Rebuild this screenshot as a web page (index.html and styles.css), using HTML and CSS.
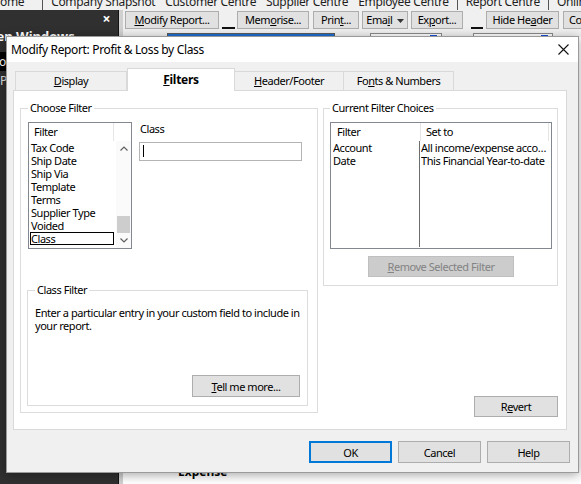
FILE: index.html
```html
<!DOCTYPE html>
<html lang="en">
<head>
    <meta charset="UTF-8">
    <meta name="viewport" content="width=device-width, initial-scale=1.0">
    <title>Modify Report: Profit &amp; Loss by Class</title>
    <link rel="stylesheet" href="styles.css">
</head>
<body>

    <div class="app">
        <div class="nav-strip">
            <span class="home">ome</span><i class="sep"></i>
            <span>Company Snapshot</span>
            <span>Customer Centre</span>
            <span>Supplier Centre</span>
            <span>Employee Centre</span><i class="sep"></i>
            <span>Report Centre</span><i class="sep"></i>
            <span>Online Banking</span>
        </div>

        <div class="workspace">
            <aside class="open-windows">
                <div class="ow-top"><span class="ow-close">&times;</span></div>
                <div class="ow-title">Open Windows</div>
                <ul class="ow-list">
                    <li class="active">Profit &amp; Loss by Class</li>
                    <li>Profit &amp; Loss Standard</li>
                </ul>
            </aside>
            <div class="splitter"></div>
            <main class="report">
                <div class="report-toolbar">
                    <button class="tb modify"><u>M</u>odify Report...</button>
                    <span class="tb-spacer first"></span>
                    <button class="tb memorise">Mem<u>o</u>rise...</button>
                    <button class="tb print">Prin<u>t</u>...</button>
                    <button class="tb email">Ema<u>i</u>l
                        <svg width="7" height="4" viewBox="0 0 7 4"><path d="M0 0H7L3.5 4Z" fill="#333"/></svg>
                    </button>
                    <button class="tb export">Ex<u>p</u>ort...</button>
                    <span class="tb-spacer second"></span>
                    <button class="tb hide">Hide He<u>a</u>der</button>
                    <button class="tb collapse">Collapse</button>
                </div>
                <div class="report-fields">
                    <span class="field dates"></span>
                    <span class="field from"><i></i></span>
                    <span class="field to"><i></i></span>
                </div>
                <div class="report-body">
                    <div class="expense">Expense</div>
                </div>
            </main>
        </div>
    </div>

    <div class="dialog">
        <div class="dialog-title">
            <span>Modify Report: Profit &amp; Loss by Class</span>
            <svg class="close-x" width="11" height="11" viewBox="0 0 11 11">
                <path d="M0.5 0.5L10.5 10.5M10.5 0.5L0.5 10.5" stroke="#111" stroke-width="1.1"/>
            </svg>
        </div>

        <div class="dialog-body">
            <div class="tabs">
                <div class="tab display"><u>D</u>isplay</div>
                <div class="tab filters selected"><u>F</u>ilters</div>
                <div class="tab header"><u>H</u>eader/Footer</div>
                <div class="tab fonts">Fo<u>n</u>ts &amp; Numbers</div>
            </div>

            <div class="tab-panel">
                <fieldset class="group choose-filter">
                    <legend>Choose Filter</legend>
                    <div class="filter-pick">
                        <div class="listbox">
                            <div class="lb-head"><span>Filter</span></div>
                            <div class="lb-body">
                                <ul class="lb-items">
                                    <li>Tax Code</li>
                                    <li>Ship Date</li>
                                    <li>Ship Via</li>
                                    <li>Template</li>
                                    <li>Terms</li>
                                    <li>Supplier Type</li>
                                    <li>Voided</li>
                                    <li class="focus">Class</li>
                                </ul>
                                <div class="vscroll">
                                    <span class="arrow">
                                        <svg width="8" height="5" viewBox="0 0 8 5"><path d="M0.5 4.5L4 1L7.5 4.5" fill="none" stroke="#606060" stroke-width="1.2"/></svg>
                                    </span>
                                    <span class="track"></span>
                                    <span class="thumb"></span>
                                    <span class="arrow">
                                        <svg width="8" height="5" viewBox="0 0 8 5"><path d="M0.5 0.5L4 4L7.5 0.5" fill="none" stroke="#606060" stroke-width="1.2"/></svg>
                                    </span>
                                </div>
                            </div>
                        </div>
                        <div class="class-field">
                            <label>Class</label>
                            <div class="textbox"><span class="caret"></span></div>
                        </div>
                    </div>

                    <fieldset class="group class-filter">
                        <legend>Class Filter</legend>
                        <p>Enter a particular entry in your custom field to include in<br>your report.</p>
                        <div class="btn-row">
                            <button class="tell-more"><u>T</u>ell me more...</button>
                        </div>
                    </fieldset>
                </fieldset>

                <div class="right-col">
                    <fieldset class="group current">
                        <legend>Current Filter Choices</legend>
                        <div class="listview">
                            <div class="lv-head">
                                <span class="c1">Filter</span>
                                <span class="c2">Set to</span>
                            </div>
                            <div class="lv-body">
                                <div class="lv-col c1">
                                    <div>Account</div>
                                    <div>Date</div>
                                </div>
                                <div class="lv-col c2">
                                    <div>All income/expense accounts</div>
                                    <div>This Financial Year-to-date</div>
                                </div>
                            </div>
                        </div>
                        <div class="btn-center">
                            <button class="remove" disabled><u>R</u>emove Selected Filter</button>
                        </div>
                    </fieldset>
                    <div class="btn-row">
                        <button class="revert">R<u>e</u>vert</button>
                    </div>
                </div>
            </div>

            <div class="dialog-buttons">
                <button class="default">OK</button>
                <button>Cancel</button>
                <button>Help</button>
            </div>
        </div>
    </div>

</body>
</html>
```

FILE: styles.css
```css
* {
    box-sizing: border-box;
}

body {
    margin: 0;
    width: 581px;
    height: 484px;
    overflow: hidden;
    position: relative;
    font-family: "Noto Sans", sans-serif;
    font-size: 11px;
    letter-spacing: -0.45px;
    color: #000;
    background: #fff;
}

button {
    font-family: inherit;
    font-size: 11px;
    letter-spacing: inherit;
    color: #000;
    background: #e1e1e1;
    border: 1px solid #adadad;
    border-radius: 0;
    padding: 0;
}

u {
    text-decoration-thickness: 1px;
    text-underline-offset: 1px;
}

/* ---------- application behind the dialog ---------- */

.app {
    display: flex;
    flex-direction: column;
    height: 484px;
}

.nav-strip {
    height: 10px;
    overflow: hidden;
    background: #f0f0f0;
    display: flex;
    font-size: 12px;
    letter-spacing: -0.35px;
    line-height: 12px;
    color: #1e1e1e;
    white-space: nowrap;
}

.nav-strip span {
    margin: -4px 10px 0 0;
    flex: none;
}

.nav-strip .home {
    padding-right: 10px;
}

.nav-strip .sep {
    flex: none;
    width: 1px;
    background: #555;
    margin: 0 8px 0 -2px;
}

.workspace {
    flex: 1;
    display: flex;
}

.open-windows {
    flex: none;
    width: 118px;
    background: #303030;
    color: #fff;
    overflow: hidden;
}

.ow-top {
    height: 18px;
    display: flex;
    justify-content: flex-end;
    align-items: center;
    padding-right: 8px;
}

.ow-close {
    font-size: 14px;
    font-weight: bold;
    line-height: 14px;
}

.ow-title {
    font-size: 13px;
    line-height: 16px;
    font-weight: bold;
    letter-spacing: 0;
    margin-left: -22px;
    white-space: nowrap;
}

.ow-list {
    list-style: none;
    margin: 8px 0 0;
    padding: 0;
    color: #ddd;
    white-space: nowrap;
}

.ow-list li {
    line-height: 19px;
    font-size: 12px;
}

.ow-list li.active {
    background: #000;
    margin-left: -12px;
    color: #fff;
}

.splitter {
    flex: none;
    width: 5px;
    background: #d0d0d0;
    border-left: 1px solid #141414;
}

.report {
    flex: 1;
    min-width: 0;
    display: flex;
    flex-direction: column;
    background: #fff;
}

.report-toolbar {
    height: 20px;
    background: #f0f0f0;
    display: flex;
    align-items: flex-start;
    padding: 1px 0 0 2px;
    white-space: nowrap;
    overflow: hidden;
}

.tb {
    height: 18px;
    flex: none;
    line-height: 16px;
}

.tb.modify { width: 94px; }
.tb.memorise { width: 72px; margin-left: 2px; }
.tb.print { width: 46px; margin-left: 4px; }
.tb.email { width: 46px; margin-left: 3px; }
.tb.export { width: 52px; margin-left: 3px; }
.tb.hide { width: 73px; margin-left: 3px; }
.tb.collapse { width: 60px; margin-left: 4px; text-align: left; padding-left: 5px; }

.tb.email svg {
    vertical-align: middle;
    margin-left: 2px;
}

.tb-spacer {
    flex: none;
    height: 18px;
    border-bottom: 2px solid #111;
}

.tb-spacer.first { width: 13px; margin-left: 3px; }
.tb-spacer.second { width: 12px; margin-left: 8px; }

.report-fields {
    height: 7px;
    background: #f0f0f0;
    display: flex;
    padding-top: 3px;
    overflow: hidden;
}

.field {
    flex: none;
    height: 18px;
    background: #fff;
    border: 1px solid #8a8a8a;
    position: relative;
}

.field.dates {
    width: 168px;
    margin-left: 44px;
    background: #1e6fd0;
    border-color: #5a5a5a;
}

.field.from {
    width: 72px;
    margin-left: 35px;
}

.field.to {
    width: 80px;
    margin-left: 31px;
}

.field i {
    position: absolute;
    right: 4px;
    top: 1px;
    width: 7px;
    height: 7px;
    border: 1px solid #1b4fd8;
}

.report-body {
    flex: 1;
    display: flex;
    flex-direction: column;
    justify-content: flex-end;
}

.expense {
    font-size: 12px;
    font-weight: bold;
    letter-spacing: 0;
    line-height: 14px;
    padding-left: 55px;
    margin-bottom: 5px;
}

/* ---------- dialog ---------- */

.dialog {
    position: absolute;
    left: 6px;
    top: 36px;
    width: 573px;
    height: 437px;
    background: #f0f0f0;
    border: 1px solid #9a9a9a;
    box-shadow: 0 2px 10px rgba(0, 0, 0, 0.35);
    display: flex;
    flex-direction: column;
}

.dialog-title {
    height: 25px;
    flex: none;
    background: #fff;
    display: flex;
    align-items: center;
    justify-content: space-between;
    padding: 0 9px 0 4px;
    font-size: 12px;
    letter-spacing: -0.35px;
}

.dialog-body {
    flex: 1;
    display: flex;
    flex-direction: column;
    padding: 6px 11px 9px 6px;
}

.tabs {
    display: flex;
    align-items: flex-end;
    height: 23px;
    margin: 0 0 -1px 2px;
}

.tab {
    height: 19px;
    margin-bottom: 1px;
    border: 1px solid #d9d9d9;
    border-bottom: none;
    background: #f0f0f0;
    text-align: center;
    line-height: 18px;
}

.tab + .tab {
    border-left: none;
}

.tab.display { width: 112px; }
.tab.filters { width: 108px; }
.tab.header { width: 109px; }
.tab.fonts { width: 110px; }

.tab.selected {
    position: relative;
    z-index: 1;
    height: 23px;
    margin-bottom: 0;
    background: #fff;
    border-left: 1px solid #d9d9d9;
    font-weight: bold;
    font-size: 12px;
    letter-spacing: -0.3px;
    line-height: 22px;
}

.tab-panel {
    height: 340px;
    flex: none;
    background: #fff;
    border: 1px solid #d9d9d9;
    padding: 9px 7px 12px 6px;
    display: flex;
    gap: 5px;
}

.group {
    margin: 0;
    min-width: 0;
    border: 1px solid #dcdcdc;
}

.group legend {
    padding: 0 2px;
    line-height: 16px;
}

.choose-filter {
    width: 298px;
    height: 313px;
    padding: 6px 9px 6px 7px;
}

.filter-pick {
    display: flex;
    gap: 7px;
}

.listbox {
    width: 104px;
    height: 127px;
    border: 1px solid #828790;
    display: flex;
    flex-direction: column;
}

.lb-head {
    height: 18px;
    display: flex;
}

.lb-head span {
    width: 85px;
    padding-left: 5px;
    line-height: 18px;
    border-right: 1px solid #e5e5e5;
}

.lb-body {
    flex: 1;
    display: flex;
}

.lb-items {
    list-style: none;
    margin: 0;
    padding: 0;
    width: 87px;
}

.lb-items li {
    line-height: 13px;
    height: 13px;
    padding-left: 2px;
    white-space: nowrap;
}

.lb-items li.focus {
    width: 84px;
    margin-left: 1px;
    padding-left: 1px;
    outline: 1px solid #000;
    outline-offset: -1px;
}

.vscroll {
    width: 15px;
    display: flex;
    flex-direction: column;
    background: #fafafa;
}

.vscroll .arrow {
    height: 15px;
    display: flex;
    align-items: center;
    justify-content: center;
}

.vscroll .track {
    flex: 1;
}

.vscroll .thumb {
    height: 17px;
    margin: 0 1px;
    background: #cdcdcd;
}

.class-field {
    display: flex;
    flex-direction: column;
}

.class-field label {
    line-height: 16px;
    margin-top: -1px;
    padding-left: 1px;
}

.textbox {
    width: 163px;
    height: 19px;
    margin-top: 5px;
    border: 1px solid #b4b4b4;
    padding: 2px 0 0 3px;
}

.caret {
    display: block;
    width: 1px;
    height: 12px;
    background: #000;
}

.class-filter {
    width: 281px;
    height: 124px;
    margin: 33px 0 0 -1px;
    padding: 8px 7px 8px 7px;
}

.class-filter p {
    margin: 0;
    line-height: 13px;
    white-space: nowrap;
}

.btn-row {
    display: flex;
    justify-content: flex-end;
}

.tell-more {
    width: 108px;
    height: 22px;
    margin-top: 43px;
}

.right-col {
    width: 235px;
    display: flex;
    flex-direction: column;
    justify-content: space-between;
}

.current {
    padding: 6px 5px 8px 6px;
}

.listview {
    width: 222px;
    height: 127px;
    border: 1px solid #828790;
    display: flex;
    flex-direction: column;
}

.lv-head {
    height: 18px;
    display: flex;
    line-height: 18px;
}

.lv-head .c1 {
    width: 89px;
    padding-left: 6px;
}

.lv-head .c2 {
    width: 129px;
    padding-left: 5px;
    border-left: 1px solid #e5e5e5;
    border-right: 1px solid #e5e5e5;
}

.lv-body {
    flex: 1;
    display: flex;
}

.lv-col div {
    line-height: 13px;
    white-space: nowrap;
    overflow: hidden;
    text-overflow: ellipsis;
}

.lv-col.c1 {
    width: 89px;
    padding-left: 2px;
    border-right: 1px solid #6d6d6d;
    margin-bottom: 1px;
}

.lv-col.c2 {
    width: 131px;
    padding-left: 1px;
}

.btn-center {
    display: flex;
    justify-content: center;
    margin-top: 7px;
}

.remove {
    width: 146px;
    height: 21px;
    background: #cccccc;
    border-color: #bfbfbf;
    color: #838383;
}

.revert {
    width: 84px;
    height: 21px;
}

.dialog-buttons {
    display: flex;
    justify-content: flex-end;
    gap: 6px;
    margin: 11px -3px 0 0;
}

.dialog-buttons button {
    width: 83px;
    height: 22px;
}

.dialog-buttons .default {
    border-color: #0078d7;
    box-shadow: inset 0 0 0 1px #0078d7;
}
```
